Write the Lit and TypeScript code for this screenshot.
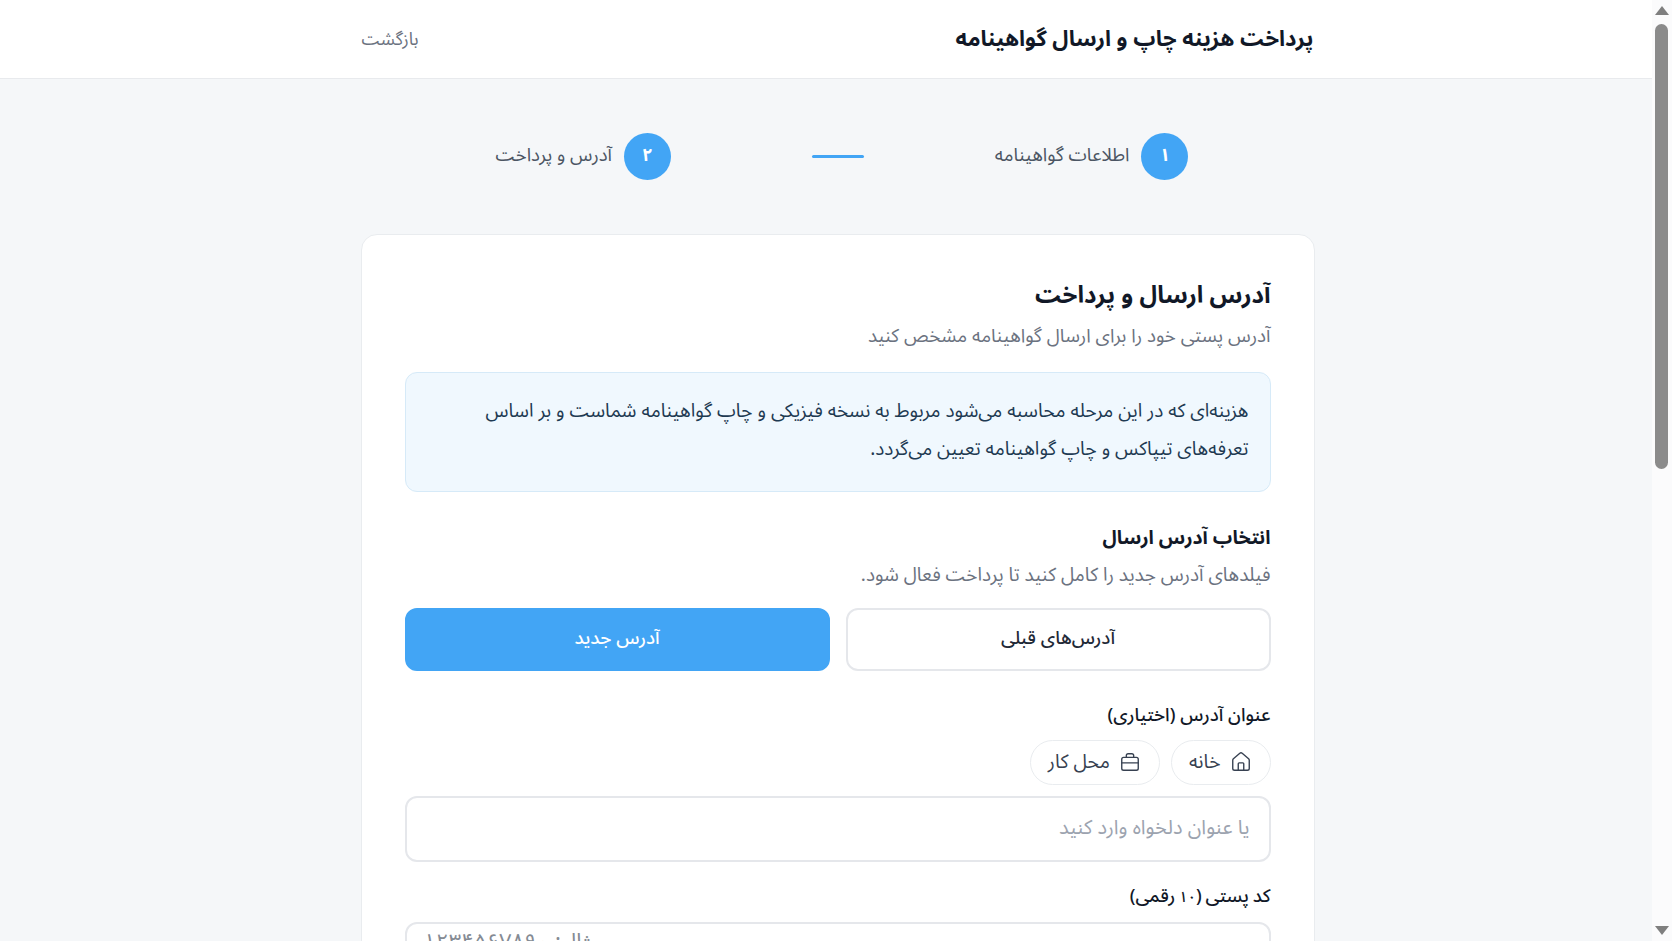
import { LitElement, html, css } from "lit";
import { customElement } from "lit/decorators.js";

@customElement("app-root")
export class AppRoot extends LitElement {
  static styles = css`
    :host {
      display: block;
      position: relative;
      height: 941px;
      overflow: hidden;
      background: #f5f7f9;
      color: #111827;
      font-family: "Noto Sans Arabic", "Vazirmatn", "DejaVu Sans", "Noto Sans", sans-serif;
    }
    header {
      height: 79px;
      padding-left: 3px;
      background: #fff;
      border-bottom: 1px solid #e8eaed;
      box-sizing: border-box;
      display: flex;
      justify-content: center;
    }
    .header-inner {
      width: 952px;
      display: flex;
      align-items: center;
      justify-content: space-between;
    }
    h1 { margin: 0; font-size: 22px; font-weight: 700; color: #111827; }
    .back { font-size: 17.6px; color: #6b7280; }
    .steps {
      display: flex;
      justify-content: center;
      align-items: center;
      gap: 131px;
      height: 155px;
      padding-left: 12px;
    }
    .step { display: flex; align-items: center; gap: 12px; }
    .circle {
      width: 47px;
      height: 47px;
      box-sizing: border-box;
      padding-bottom: 3px;
      border-radius: 50%;
      background: #42a5f5;
      color: #fff;
      font-size: 18px;
      font-weight: 700;
      display: flex;
      align-items: center;
      justify-content: center;
    }
    .step-label { font-size: 18.5px; color: #4b5563; padding-bottom: 2px; }
    .line { width: 52px; height: 3px; background: #42a5f5; border-radius: 2px; margin-inline-end: 10px; }
    .card-wrap { display: flex; justify-content: center; padding-left: 3px; }
    .card {
      width: 954px;
      box-sizing: border-box;
      background: #fff;
      border: 1px solid #e9ecef;
      border-radius: 16px;
      padding: 43px 43px 40px;
    }
    h2 { margin: 0; font-size: 24px; font-weight: 700; line-height: 36px; }
    .sub { margin: 8px 0 0; font-size: 18.8px; color: #6b7280; line-height: 28px; }
    .info {
      margin-top: 22px;
      height: 120px;
      box-sizing: border-box;
      background: #f0f8fe;
      border: 1px solid #d6eaf8;
      border-radius: 12px;
      padding: 20px 21px;
      font-size: 19px;
      line-height: 37.5px;
      color: #1e3a52;
    }
    h3 { margin: 31px 0 0; font-size: 19.3px; font-weight: 700; line-height: 30px; }
    .desc { margin-top: 8px; font-size: 18.95px; }
    .tabs { display: grid; grid-template-columns: 1fr 1fr; gap: 16px; margin-top: 19px; }
    .tab {
      height: 63px;
      box-sizing: border-box;
      border-radius: 12px;
      border: 2px solid #e5e7eb;
      background: #fff;
      padding: 0 0 2px;
      font: inherit;
      font-size: 18.5px;
      font-weight: 500;
      color: #1f2937;
    }
    .tab.active { background: #42a5f5; border-color: #42a5f5; color: #fff; }
    .field-label { font-size: 18.4px; font-weight: 500; line-height: 28px; color: #111827; }
    .num { font-size: 15px; }
    .f1 { margin-top: 31px; }
    .f2 { margin-top: 21px; word-spacing: -1px; }
    .chips { display: flex; gap: 11px; margin-top: 10px; }
    .chip {
      height: 45px;
      box-sizing: border-box;
      padding: 0 18px 2px 17px;
      border: 1px solid #e9ecef;
      border-radius: 23px;
      background: #fff;
      display: flex;
      align-items: center;
      gap: 9px;
      font: inherit;
      font-size: 19.3px;
      color: #374151;
    }
    .chip svg { width: 22px; height: 22px; fill: none; stroke: #374151; stroke-width: 1.5; stroke-linecap: round; stroke-linejoin: round; }
    .input {
      display: block;
      width: 100%;
      height: 66px;
      box-sizing: border-box;
      margin-top: 11px;
      border: 2px solid #e5e7eb;
      border-radius: 12px;
      background: #fff;
      padding: 0 19px 3px 20px;
      font: inherit;
      font-size: 20px;
      outline: none;
    }
    .input::placeholder { color: #9ca3af; opacity: 1; }
    .input.ltr { direction: ltr; text-align: left; margin-top: 11px; padding: 0 20px 26px 17px; font-size: 22px; }
    .input.ltr::placeholder { color: #858b94; }
    .scrollbar {
      position: absolute;
      top: 0;
      right: 0;
      bottom: 0;
      width: 20px;
      background: #fbfbfc;
    }
    .thumb {
      position: absolute;
      left: 3px;
      top: 24px;
      width: 13px;
      height: 445px;
      border-radius: 7px;
      background: #8b8b8b;
    }
    .arrow { position: absolute; left: 3px; width: 14px; height: 9px; fill: #7f7f7f; }
    .arrow.up { top: 6px; }
    .arrow.down { bottom: 6px; }
  `;

  render() {
    return html`
      <div dir="rtl" lang="fa">
        <header>
          <div class="header-inner">
            <h1>پرداخت هزینه چاپ و ارسال گواهینامه</h1>
            <span class="back">بازگشت</span>
          </div>
        </header>
        <div class="steps">
          <div class="step"><span class="circle">۱</span><span class="step-label">اطلاعات گواهینامه</span></div>
          <span class="line"></span>
          <div class="step"><span class="circle">۲</span><span class="step-label">آدرس و پرداخت</span></div>
        </div>
        <div class="card-wrap">
          <main class="card">
            <h2>آدرس ارسال و پرداخت</h2>
            <p class="sub">آدرس پستی خود را برای ارسال گواهینامه مشخص کنید</p>
            <div class="info">هزینه‌ای که در این مرحله محاسبه می‌شود مربوط به نسخه فیزیکی و چاپ گواهینامه شماست و بر اساس تعرفه‌های تیپاکس و چاپ گواهینامه تعیین می‌گردد.</div>
            <h3>انتخاب آدرس ارسال</h3>
            <p class="sub desc">فیلدهای آدرس جدید را کامل کنید تا پرداخت فعال شود.</p>
            <div class="tabs">
              <button class="tab">آدرس‌های قبلی</button>
              <button class="tab active">آدرس جدید</button>
            </div>
            <div class="field-label f1">عنوان آدرس (اختیاری)</div>
            <div class="chips">
              <button class="chip">
                <svg viewBox="0 0 24 24"><path d="M15 21v-7a1 1 0 0 0-1-1h-4a1 1 0 0 0-1 1v7"></path><path d="M3 10a2 2 0 0 1 .709-1.528l7-5.999a2 2 0 0 1 2.582 0l7 5.999A2 2 0 0 1 21 10v9a2 2 0 0 1-2 2H5a2 2 0 0 1-2-2z"></path></svg>
                خانه
              </button>
              <button class="chip">
                <svg viewBox="0 0 24 24"><rect x="3" y="7" width="18" height="14" rx="2"></rect><path d="M8 7V5a2 2 0 0 1 2-2h4a2 2 0 0 1 2 2v2"></path><path d="M3 13h18"></path></svg>
                محل کار
              </button>
            </div>
            <input class="input" placeholder="یا عنوان دلخواه وارد کنید" />
            <div class="field-label f2">کد پستی (<span class="num">۱۰</span> رقمی)</div>
            <input class="input ltr" placeholder="۱۲۳۴۵۶۷۸۹۰ :مثال" />
          </main>
        </div>
      </div>
      <div class="scrollbar">
        <svg class="arrow up" viewBox="0 0 14 9"><path d="M7 0l7 9H0z"></path></svg>
        <div class="thumb"></div>
        <svg class="arrow down" viewBox="0 0 14 9"><path d="M0 0h14L7 9z"></path></svg>
      </div>
    `;
  }
}
